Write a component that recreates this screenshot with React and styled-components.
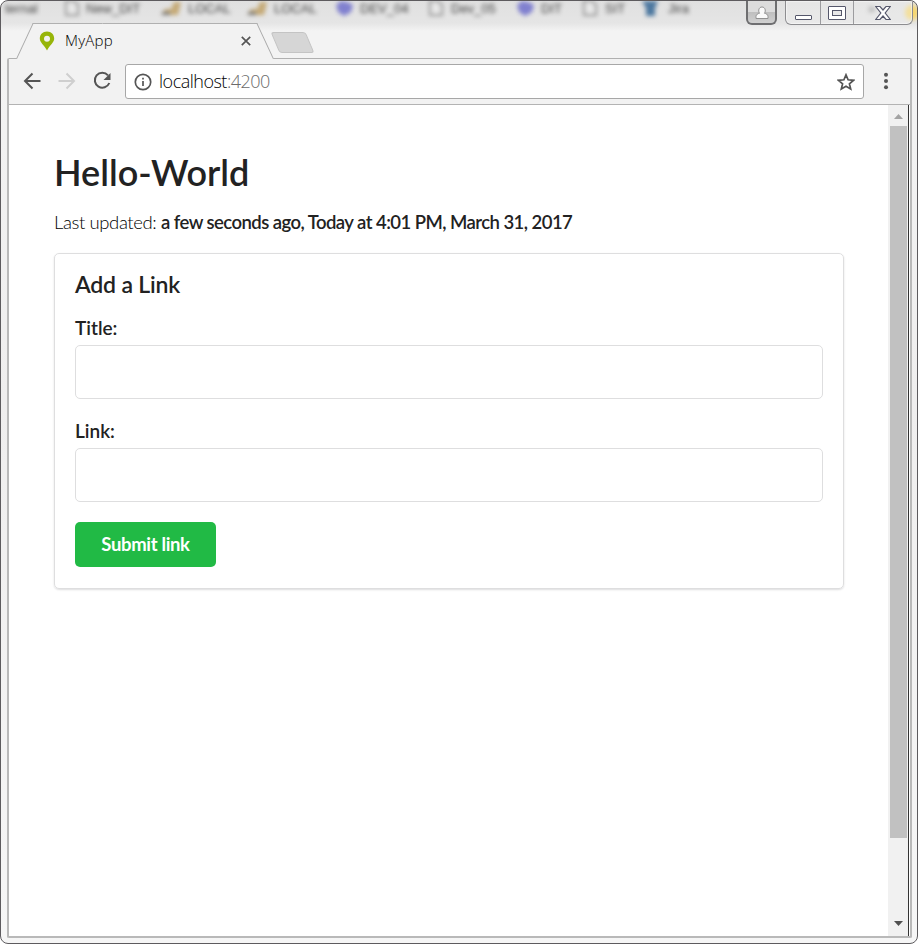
import React from "react";
import styled, { createGlobalStyle } from "styled-components";

const GlobalStyle = createGlobalStyle`
  *, *::before, *::after { box-sizing: border-box; }
  body { margin: 0; background: #fff; overflow: hidden; }
`;

const Window = styled.div`
  position: relative;
  display: flex;
  flex-direction: column;
  width: 918px;
  height: 944px;
  padding: 0 5px 5px 6px;
  overflow: hidden;
  border: 1px solid #5d5b5e;
  border-radius: 8px;
  background: linear-gradient(#e0e0e0 0, #e5e5e5 22px, #f3f3f3 30px, #f3f3f3 60px, #efeeee 400px, #f6f6f6 100%);
  font-family: "Open Sans", "Noto Sans", sans-serif;
`;

const Backdrop = styled.div`
  position: absolute;
  top: 0;
  left: 0;
  right: 0;
  height: 20px;
  filter: blur(2.2px);
  font-family: "Liberation Sans", Arial, sans-serif;
  font-size: 13px;
  line-height: 15px;
`;

const BackdropItem = styled.span`
  position: absolute;
  top: 0;
  left: ${(p) => p.$x}px;
  color: #444;
  white-space: nowrap;
  svg { display: block; margin-top: -4px; }
`;

const Glow = styled.div`
  position: absolute;
  top: 4px;
  right: -2px;
  width: 14px;
  height: 15px;
  border-radius: 7px;
  background: #f6d66e;
  filter: blur(2px);
`;

const TabStrip = styled.div`
  position: relative;
  display: flex;
  flex: none;
  align-items: flex-end;
  height: 57px;
  padding-left: 9px;
`;

const Tab = styled.div`
  position: relative;
  z-index: 1;
  display: flex;
  align-items: center;
  width: 258px;
  height: 36px;
  margin-bottom: -1px;
  padding: 0 23px 1px 23px;
  font-size: 15px;
  font-weight: 300;
  color: #000;
  &::before, &::after {
    content: "";
    position: absolute;
    z-index: -1;
    top: 0;
    bottom: 0;
    width: 60%;
    border-top: 1px solid #b0b0b0;
    background: #f2f2f2;
  }
  &::before {
    left: 0;
    border-left: 1px solid #a9a9a9;
    transform: skewX(-25deg);
    transform-origin: 0 100%;
  }
  &::after {
    right: 0;
    border-right: 1px solid #a9a9a9;
    transform: skewX(25deg);
    transform-origin: 100% 100%;
  }
`;

const TabTitle = styled.span`
  flex: 1;
  margin: -2px 0 0 10px;
  letter-spacing: 0.25px;
`;

const NewTab = styled.div`
  width: 35px;
  height: 21px;
  margin: 0 0 5px 1px;
  border: 1px solid #c4c4c4;
  border-radius: 3px;
  background: #d6d6d6;
  transform: skewX(23deg);
`;

const CaptionButtons = styled.div`
  position: absolute;
  top: 0;
  right: -1px;
  display: flex;
  align-items: flex-start;
`;

const ProfileButton = styled.div`
  display: grid;
  place-items: center;
  width: 31px;
  height: 24px;
  margin-right: 8px;
  border: 2px solid #6e6e70;
  border-top: 0;
  border-radius: 0 0 6px 6px;
  background: linear-gradient(#dcdcdc 50%, #bfbfbf 52%, #d0d0d0);
`;

const CaptionGroup = styled.div`
  display: flex;
  height: 24px;
  border: 1px solid #8d8d90;
  border-top: 0;
  border-radius: 0 0 6px 6px;
  background: rgba(240, 240, 240, 0.35);
  box-shadow: inset 0 0 1px 1px rgba(255, 255, 255, 0.5);
`;

const CaptionButton = styled.div`
  display: grid;
  place-items: center;
  width: ${(p) => p.$w}px;
  & + & { border-left: 1px solid #9c9c9f; }
`;

const Frame = styled.div`
  display: flex;
  flex: 1;
  flex-direction: column;
  min-height: 0;
  border: 2px solid #b9b9b9;
  border-top: 1px solid #b0b0b0;
  border-radius: 2px;
  background: #fff;
`;

const Toolbar = styled.div`
  display: flex;
  flex: none;
  align-items: center;
  height: 46px;
  padding: 0 15px 0 11px;
  border-bottom: 1px solid #b3b3b3;
  background: #f2f2f2;
`;

const NavIcon = styled.svg`
  width: 24px;
  height: 24px;
  margin: 0 11px 2px 0;
  fill: none;
  stroke: ${(p) => (p.$muted ? "#cfcfcf" : "#555")};
  stroke-width: 2;
`;

const AddressBar = styled.div`
  display: flex;
  align-items: center;
  width: 739px;
  height: 35px;
  padding: 0 8px;
  border: 1px solid #a7a7a7;
  border-radius: 3px;
  background: #fff;
`;

const Url = styled.span`
  flex: 1;
  margin: -2px 0 0 7px;
  font-size: 18px;
  font-weight: 300;
  line-height: 24px;
  color: #000;
  letter-spacing: -0.5px;
`;

const Port = styled.span`
  color: #6b6b6b;
`;

const MenuIcon = styled.svg`
  margin: 0 0 2px auto;
  fill: #555;
`;

const Viewport = styled.div`
  display: flex;
  flex: 1;
  min-height: 0;
  margin-right: 1px;
  border-right: 1px solid #333;
`;

const Page = styled.main`
  flex: 1;
  padding: 45px 44px 0 45px;
  font-family: Lato, sans-serif;
  font-size: 18px;
  color: #222;
`;

const Scrollbar = styled.div`
  display: flex;
  flex-direction: column;
  align-items: center;
  width: 20px;
  padding: 9px 1px 10px 2px;
  background: #f1f1f1;
`;

const Thumb = styled.div`
  width: 17px;
  height: 712px;
  margin: 7px 0 auto;
  background: #c1c1c1;
`;

const Title = styled.h1`
  margin: 0;
  font-size: 36px;
  line-height: 44px;
  font-weight: 600;
`;

const Updated = styled.p`
  margin: 15px 0 18px;
  font-size: 18.5px;
  font-weight: 300;
  line-height: 26px;
  letter-spacing: -0.4px;
  white-space: nowrap;
  color: #000;
`;

const Moment = styled.strong`
  color: #222;
  font-weight: 600;
  letter-spacing: -0.55px;
`;

const Card = styled.form`
  height: 336px;
  padding: 16px 20px;
  border: 1px solid #dededf;
  border-radius: 5px;
  box-shadow: 0 1px 2px rgba(34, 36, 38, 0.15);
`;

const CardTitle = styled.h3`
  margin: 0 0 17px;
  font-size: 23px;
  line-height: 28px;
  font-weight: 600;
  letter-spacing: -0.2px;
`;

const Field = styled.div`
  margin-bottom: 19px;
`;

const Label = styled.label`
  display: block;
  margin-bottom: 5px;
  font-size: 19px;
  line-height: 25px;
  font-weight: 600;
`;

const Input = styled.input`
  display: block;
  width: 100%;
  height: 54px;
  padding: 0 16px;
  border: 1px solid #dededf;
  border-radius: 5px;
  outline: 0;
  font: inherit;
`;

const Submit = styled.button`
  display: block;
  width: 141px;
  height: 45px;
  margin-top: 20px;
  padding: 0;
  border: 0;
  border-radius: 5px;
  background: #21ba45;
  color: #fff;
  font: 700 18.5px/45px Lato, sans-serif;
  letter-spacing: -0.35px;
`;

const bookmarks = [
  { x: 4, text: "ternal" },
  { x: 62, icon: "page" },
  { x: 85, text: "New_DIT" },
  { x: 160, icon: "cat" },
  { x: 187, text: "LOCAL" },
  { x: 246, icon: "cat" },
  { x: 273, text: "LOCAL" },
  { x: 334, icon: "blob" },
  { x: 359, text: "DEV_04" },
  { x: 426, icon: "page" },
  { x: 450, text: "Dev_05" },
  { x: 515, icon: "blob" },
  { x: 540, text: "DIT" },
  { x: 580, icon: "page" },
  { x: 604, text: "SIT" },
  { x: 640, icon: "jira" },
  { x: 667, text: "Jira" },
  { x: 867, text: "»" },
];

function BookmarkIcon({ kind }) {
  return (
    <svg width="20" height="20" viewBox="0 0 20 20">
      {kind === "page" && <path d="M3 4h8l4 4v10H3z" fill="#e8e8e8" stroke="#999" strokeWidth="2" />}
      {kind === "cat" && (
        <>
          <path d="M0 18L4 12L10 12L13 5H20L17 18z" fill="#c5aa77" />
          <path d="M1 15h8v3H1z" fill="#777" />
        </>
      )}
      {kind === "blob" && <path d="M1 8l5-4 6 1 6 3-2 7-7 4-6-4z" fill="#8080cf" />}
      {kind === "jira" && <path d="M1 4h16l-3 7v8H5v-8z" fill="#4c779f" />}
    </svg>
  );
}

export default function App() {
  return (
    <>
      <GlobalStyle />
      <Window>
        <Backdrop aria-hidden="true">
          {bookmarks.map((b) => (
            <BackdropItem key={b.x} $x={b.x}>
              {b.icon ? <BookmarkIcon kind={b.icon} /> : b.text}
            </BackdropItem>
          ))}
        </Backdrop>
        <Glow />
        <TabStrip>
          <Tab>
            <svg width="16" height="20" viewBox="0 0 16 20">
              <path
                fillRule="evenodd"
                fill="#97b50a"
                d="M8 .5C3.7.5.8 3.7.8 7.5c0 4 4.2 6.5 7.2 12 3-5.500 7.200-8 7.200-12C15.200 3.700 12.300.500 8 .500zM8 4.700a3 3 0 1 1 0 6 3 3 0 0 1 0-6z"
              />
            </svg>
            <TabTitle>MyApp</TabTitle>
            <svg width="10" height="10" viewBox="0 0 10 10" stroke="#555" strokeWidth="1.7">
              <path d="M.8.8l8.400 8.400M9.200.8L.8 9.200" />
            </svg>
          </Tab>
          <NewTab />
          <CaptionButtons>
            <ProfileButton>
              <svg width="14" height="15" viewBox="0 0 14 15" fill="#fafafa" stroke="#929292" strokeWidth="1">
                <path d="M1 13.500v-2c0-2 2-3 3.500-3.200C2.800 5.500 4 2 7 2s4.200 3.500 2.500 6.300C11 8.500 13 9.500 13 11.500v2z" />
              </svg>
            </ProfileButton>
            <CaptionGroup>
              <CaptionButton $w={34}>
                <svg width="18" height="24" viewBox="0 0 18 24">
                  <rect x="1.500" y="14.500" width="16" height="4" rx=".5" fill="#fff" stroke="#55576b" />
                </svg>
              </CaptionButton>
              <CaptionButton $w={33}>
                <svg width="18" height="24" viewBox="0 0 18 24" fill="#fff" stroke="#55576b">
                  <rect x=".5" y="5.500" width="17" height="13" rx=".5" />
                  <rect x="4.500" y="9.500" width="9" height="5" fill="#e8e8e8" />
                </svg>
              </CaptionButton>
              <CaptionButton $w={59}>
                <svg width="16" height="24" viewBox="0 0 16 24">
                  <path
                    d="M.7 5.500H5L8 9l3-3.500h4.300L10.200 12l5.100 6.500H11L8 15l-3 3.500H.7L5.800 12z"
                    fill="#fff"
                    stroke="#55576b"
                    strokeWidth="1.200"
                  />
                </svg>
              </CaptionButton>
            </CaptionGroup>
          </CaptionButtons>
        </TabStrip>
        <Frame>
          <Toolbar>
            <NavIcon viewBox="0 0 24 24">
              <path d="M20.500 12H5.500M12.500 4.500L5 12l7.500 7.500" />
            </NavIcon>
            <NavIcon viewBox="0 0 24 24" $muted>
              <path d="M3.500 12h15M11.500 4.500L19 12l-7.500 7.500" />
            </NavIcon>
            <NavIcon viewBox="0 0 24 24">
              <path d="M18 6.300A7.500 7.500 0 1 0 19.300 14" />
              <path d="M20.500 4v7h-7z" fill="#555" stroke="none" />
            </NavIcon>
            <AddressBar>
              <svg width="18" height="18" viewBox="0 0 18 18" fill="none" stroke="#555" strokeWidth="1.700">
                <circle cx="9" cy="9" r="7.700" />
                <path d="M9 8v5M9 4.700v1.800" />
              </svg>
              <Url>
                localhost<Port>:4200</Port>
              </Url>
              <svg width="18" height="18" viewBox="0 0 18 18" fill="none" stroke="#555" strokeWidth="1.700">
                <path d="M9 1.800l2.100 5 5.400.5-4.100 3.500 1.300 5.300L9 13.300l-4.700 2.800 1.300-5.300-4.100-3.500 5.400-.5z" />
              </svg>
            </AddressBar>
            <MenuIcon width="18" height="18" viewBox="0 0 18 18">
              <circle cx="9" cy="2.700" r="2" />
              <circle cx="9" cy="9" r="2" />
              <circle cx="9" cy="15.300" r="2" />
            </MenuIcon>
          </Toolbar>
          <Viewport>
            <Page>
              <Title>Hello-World</Title>
              <Updated>
                Last updated: <Moment>a few seconds ago, Today at 4:01 PM, March 31, 2017</Moment>
              </Updated>
              <Card>
                <CardTitle>Add a Link</CardTitle>
                <Field>
                  <Label htmlFor="title">Title:</Label>
                  <Input id="title" />
                </Field>
                <Field>
                  <Label htmlFor="link">Link:</Label>
                  <Input id="link" />
                </Field>
                <Submit type="button">Submit link</Submit>
              </Card>
            </Page>
            <Scrollbar>
              <svg width="9" height="5" viewBox="0 0 9 5">
                <path d="M0 5l4.500-5L9 5z" fill="#a3a3a3" />
              </svg>
              <Thumb />
              <svg width="9" height="5" viewBox="0 0 9 5">
                <path d="M0 0l4.500 5L9 0z" fill="#505050" />
              </svg>
            </Scrollbar>
          </Viewport>
        </Frame>
      </Window>
    </>
  );
}
